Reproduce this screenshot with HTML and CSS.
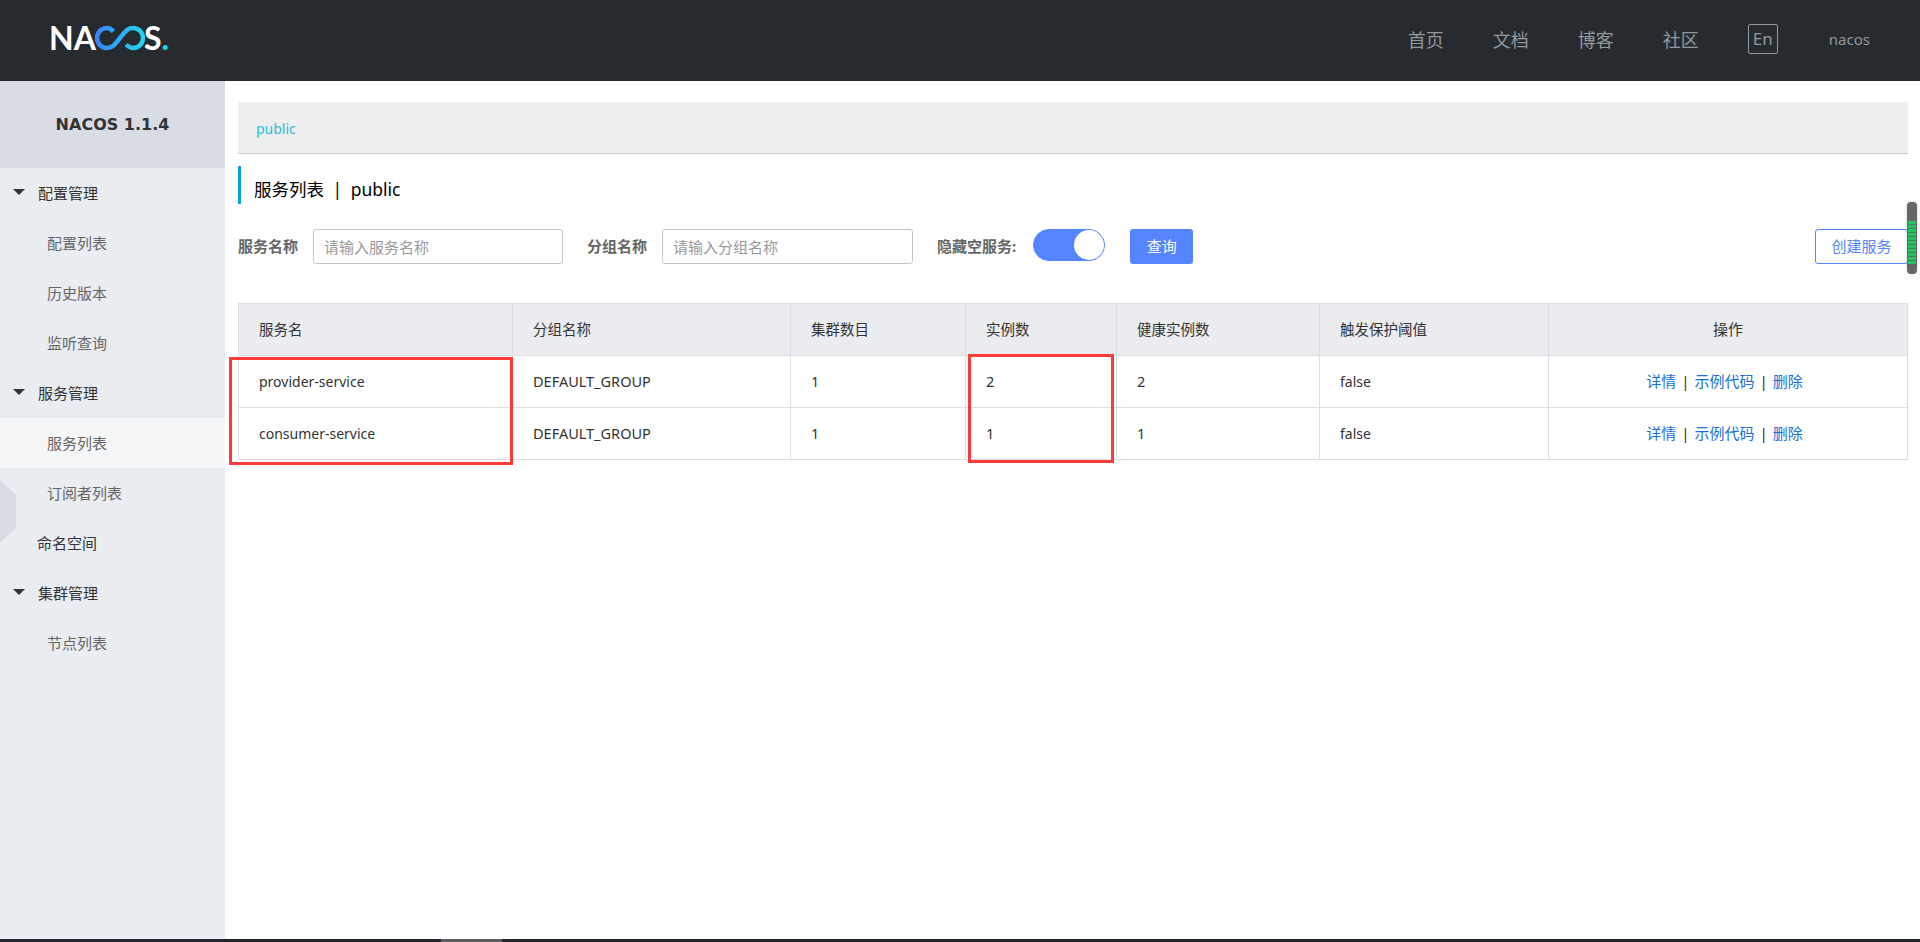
FILE: index.html
```html
<!DOCTYPE html>
<html lang="en">
<head>
<meta charset="UTF-8">
<meta name="viewport" content="width=device-width, initial-scale=1.0">
<title>Nacos</title>
<link rel="stylesheet" href="styles.css">
</head>
<body>

<div class="header">
  <div class="logo">
    <span>NA</span>
    <svg class="logo-loop" width="50" height="26" viewBox="0 0 50 26">
      <defs>
        <linearGradient id="loopGrad" x1="0" y1="0" x2="1" y2="0">
          <stop offset="0" stop-color="#3a84ff"/>
          <stop offset="1" stop-color="#1fd6ee"/>
        </linearGradient>
      </defs>
      <path d="M18.5 6.5C16.5 4.2 14.5 3 12 3A10 10 0 0 0 12 23C18 23 20 19 25 13C30 7 32 3 38 3A10 10 0 0 1 38 23C35 23 33 21.5 31 19.5" fill="none" stroke="url(#loopGrad)" stroke-width="4.5"/>
    </svg>
    <span>S</span><span class="logo-dot">.</span>
  </div>
  <div class="nav">
    <a class="nav-link">首页</a>
    <a class="nav-link">文档</a>
    <a class="nav-link">博客</a>
    <a class="nav-link">社区</a>
    <a class="lang-button">En</a>
    <a class="user-name">nacos</a>
  </div>
</div>

<div class="layout">
  <div class="sidebar">
    <div class="version">NACOS 1.1.4</div>
    <div class="hexagon"></div>
    <div class="menu">
      <div class="menu-group"><i class="arrow"></i>配置管理</div>
      <div class="menu-item">配置列表</div>
      <div class="menu-item">历史版本</div>
      <div class="menu-item">监听查询</div>
      <div class="menu-group"><i class="arrow"></i>服务管理</div>
      <div class="menu-item active">服务列表</div>
      <div class="menu-item">订阅者列表</div>
      <div class="menu-group no-arrow">命名空间</div>
      <div class="menu-group"><i class="arrow"></i>集群管理</div>
      <div class="menu-item">节点列表</div>
    </div>
  </div>

  <div class="main">
    <div class="breadcrumb">public</div>
    <div class="page-title">服务列表<span class="title-sep">|</span>public</div>

    <div class="search-form">
      <label class="form-label">服务名称</label>
      <input class="form-input" type="text" placeholder="请输入服务名称">
      <label class="form-label">分组名称</label>
      <input class="form-input wide-input" type="text" placeholder="请输入分组名称">
      <label class="form-label switch-label">隐藏空服务:</label>
      <div class="switch"><span class="switch-knob"></span></div>
      <button class="button query-button">查询</button>
      <button class="button create-button">创建服务</button>
    </div>

    <table class="service-table">
      <colgroup>
        <col class="col-name">
        <col class="col-group">
        <col class="col-cluster">
        <col class="col-count">
        <col class="col-healthy">
        <col class="col-protect">
        <col>
      </colgroup>
      <thead>
        <tr>
          <th>服务名</th>
          <th>分组名称</th>
          <th>集群数目</th>
          <th>实例数</th>
          <th>健康实例数</th>
          <th>触发保护阈值</th>
          <th class="center">操作</th>
        </tr>
      </thead>
      <tbody>
        <tr>
          <td class="small">provider-service</td>
          <td>DEFAULT_GROUP</td>
          <td>1</td>
          <td>2</td>
          <td>2</td>
          <td class="small">false</td>
          <td class="center actions"><a>详情</a><span class="sep">|</span><a>示例代码</a><span class="sep">|</span><a>删除</a></td>
        </tr>
        <tr>
          <td class="small">consumer-service</td>
          <td>DEFAULT_GROUP</td>
          <td>1</td>
          <td>1</td>
          <td>1</td>
          <td class="small">false</td>
          <td class="center actions"><a>详情</a><span class="sep">|</span><a>示例代码</a><span class="sep">|</span><a>删除</a></td>
        </tr>
      </tbody>
    </table>
  </div>
</div>

<!-- annotations drawn over the screenshot -->
<div class="mark mark-names"></div>
<div class="mark mark-count"></div>

<div class="scroll-widget"><div class="scroll-level"></div></div>

<div class="bottom-bar"><div class="bottom-thumb"></div></div>

</body>
</html>
```

FILE: styles.css
```css
/* General Styles */
* {
  box-sizing: border-box;
}

html, body {
  height: 100%;
}

body {
  margin: 0;
  overflow: hidden;
  background-color: #fff;
  color: #333;
  font-family: "Noto Sans", "Noto Sans CJK SC", sans-serif;
  font-size: 15px;
}

/* Header */
.header {
  display: flex;
  align-items: center;
  justify-content: space-between;
  height: 81px;
  padding: 0 50px 0 49px;
  background-color: #262b30;
}

.logo {
  display: flex;
  align-items: center;
  height: 38px;
  margin-bottom: 6px;
  color: #fff;
  font-family: "Lato", sans-serif;
  font-size: 32px;
  font-weight: 700;
}

.logo-loop {
  margin: 0 -1px 0 -1px;
}

.logo-dot {
  color: #1fd6ee;
}

.nav {
  display: flex;
  align-items: center;
  margin-bottom: 3px;
  color: #94989b;
}

.nav-link {
  margin-right: 49px;
  font-size: 18px;
}

.lang-button {
  width: 30px;
  height: 30px;
  margin-right: 51px;
  border: 1px solid #94989b;
  border-radius: 2px;
  font-size: 17px;
  line-height: 28px;
  text-align: center;
}

.user-name {
  font-size: 15px;
}

/* Sidebar */
.layout {
  display: flex;
  height: 858px;
}

.sidebar {
  position: relative;
  width: 225px;
  background-color: #e9edf2;
}

.version {
  height: 87px;
  background-color: #d8dde5;
  color: #333;
  font-family: "DejaVu Sans", sans-serif;
  font-size: 16px;
  font-weight: 700;
  line-height: 87px;
  text-align: center;
}

.hexagon {
  position: absolute;
  top: 399px;
  left: 0;
  width: 16px;
  height: 63px;
  background-color: #d8dde5;
  clip-path: polygon(0 0, 100% 24%, 100% 76%, 0 100%);
}

.menu {
  position: relative;
}

.menu-group,
.menu-item {
  height: 50px;
  line-height: 50px;
}

.menu-group {
  display: flex;
  align-items: center;
  padding-left: 13px;
  color: #333;
}

.menu-group.no-arrow {
  padding-left: 37px;
}

.arrow {
  width: 0;
  height: 0;
  margin-right: 13px;
  margin-top: -3px;
  border-top: 6px solid #333;
  border-left: 6px solid transparent;
  border-right: 6px solid transparent;
}

.menu-item {
  padding-left: 47px;
  color: #666;
}

.menu-item.active {
  background-color: #f4f6f8;
}

/* Main content */
.main {
  flex: 1;
  padding: 21px 12px 0 13px;
}

.breadcrumb {
  height: 52px;
  padding-left: 18px;
  border-bottom: 1px solid #ccc;
  background-color: #eee;
  color: #1fbfe0;
  font-size: 14px;
  line-height: 54px;
}

.page-title {
  height: 38px;
  margin-top: 12px;
  padding-left: 13px;
  border-left: 3px solid #09a0d6;
  color: #000;
  font-size: 17.5px;
  line-height: 46px;
}

.title-sep {
  margin: 0 8.5px;
}

.search-form {
  display: flex;
  align-items: flex-start;
  height: 74px;
  margin-top: 25px;
}

.form-label {
  margin-right: 15px;
  color: #666;
  font-size: 15px;
  font-weight: 700;
  line-height: 34px;
}

.form-input {
  width: 250px;
  height: 35px;
  margin-right: 24px;
  padding: 0 10px;
  border: 1px solid #c4c6cf;
  border-radius: 3px;
  font-family: inherit;
  font-size: 15px;
  outline: none;
}

.form-input::placeholder {
  color: #999;
}

.wide-input {
  width: 251px;
}

.switch-label {
  margin-right: 17px;
}

.switch {
  display: flex;
  justify-content: flex-end;
  width: 72px;
  height: 32px;
  margin-right: 25px;
  border: 1px solid #5584ff;
  border-radius: 16px;
  background-color: #5584ff;
}

.switch-knob {
  width: 30px;
  height: 30px;
  border-radius: 50%;
  background-color: #fff;
}

.button {
  height: 35px;
  padding: 0 0 2px;
  border-radius: 3px;
  font-family: inherit;
  font-size: 15px;
  cursor: pointer;
}

.query-button {
  width: 63px;
  border: none;
  background-color: #5584ff;
  color: #fff;
}

.create-button {
  width: 93px;
  margin-left: auto;
  border: 1px solid #5584ff;
  background-color: #fff;
  color: #5584ff;
}

/* Table */
.service-table {
  width: 100%;
  table-layout: fixed;
  border-collapse: collapse;
  font-size: 14.5px;
}

.col-name { width: 274px; }
.col-group { width: 278px; }
.col-cluster { width: 175px; }
.col-count { width: 151px; }
.col-healthy { width: 203px; }
.col-protect { width: 229px; }

.service-table th,
.service-table td {
  height: 52px;
  padding: 0 20px 2px;
  border: 1px solid #dcdee3;
  color: #333;
  font-weight: 400;
  text-align: left;
}

.service-table th {
  background-color: #ebecf0;
}

.service-table .small {
  padding-bottom: 1px;
  font-size: 14px;
}

.service-table .center {
  font-size: 15px;
  text-align: center;
}

.service-table .actions {
  padding-right: 27px;
}

.service-table a {
  color: #1a6fd6;
}

.sep {
  margin: 0 5px;
  color: #333;
}

/* Red annotation boxes */
.mark {
  position: absolute;
  border: 3px solid #fb3a3a;
}

.mark-names {
  top: 357px;
  left: 229px;
  width: 284px;
  height: 108px;
}

.mark-count {
  top: 354px;
  left: 968px;
  width: 146px;
  height: 109px;
}

/* Floating speed widget at the right edge */
.scroll-widget {
  position: absolute;
  top: 202px;
  left: 1907px;
  width: 10px;
  height: 72px;
  border-radius: 4px;
  background-color: #666;
  box-shadow: 0 0 4px rgba(0, 0, 0, 0.15);
}

.scroll-level {
  position: absolute;
  top: 19px;
  left: 1px;
  width: 8px;
  height: 43px;
  background: repeating-linear-gradient(to bottom, #22c55e 0, #22c55e 3px, #4a7d5c 3px, #4a7d5c 4px);
}

/* Dark strip at the bottom of the window */
.bottom-bar {
  position: absolute;
  top: 939px;
  left: 0;
  width: 100%;
  height: 3px;
  background-color: #22252b;
}

.bottom-thumb {
  width: 61px;
  height: 3px;
  margin-left: 441px;
  background-color: #5f5c5e;
}
```
